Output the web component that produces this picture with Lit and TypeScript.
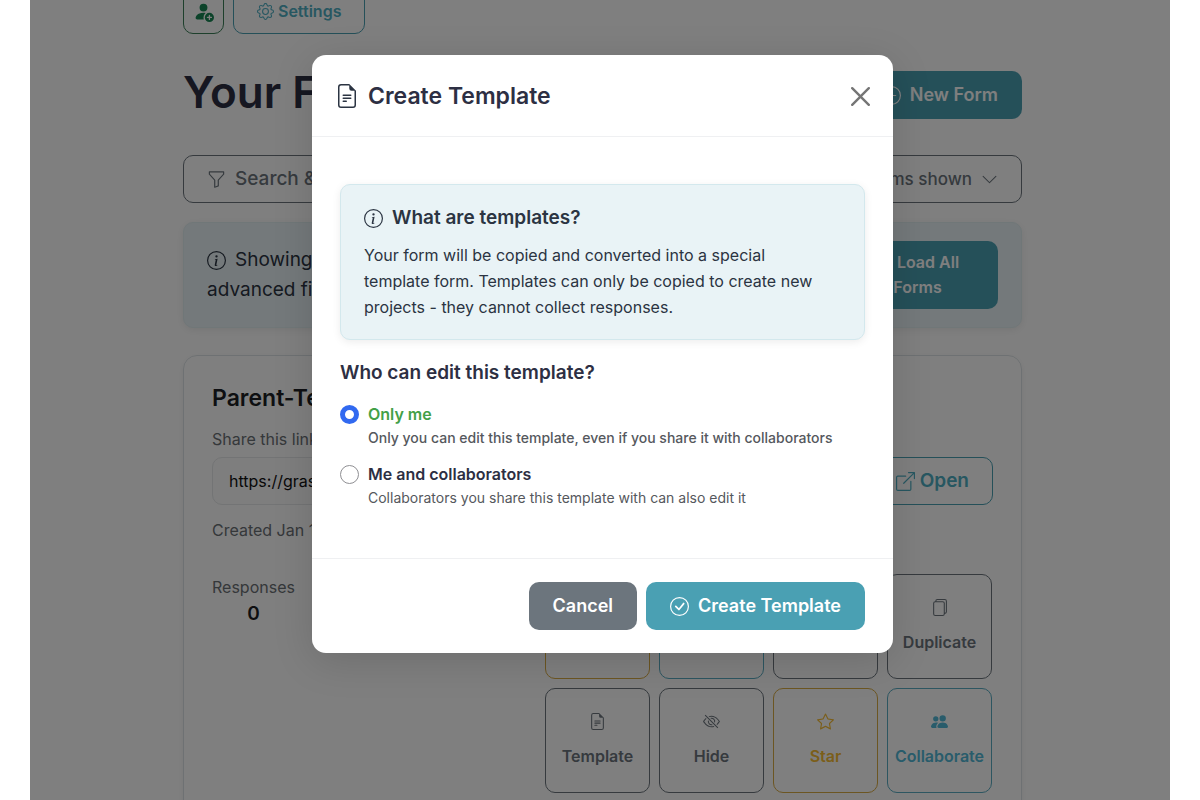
import { LitElement, html, css, svg } from "lit";
import { customElement, state } from "lit/decorators.js";

const ICONS: Record<string, string[]> = {
  fileText: [
    "M5.5 7a.5.5 0 0 0 0 1h5a.5.5 0 0 0 0-1h-5zM5 9.5a.5.5 0 0 1 .5-.5h5a.5.5 0 0 1 0 1h-5a.5.5 0 0 1-.5-.5zm0 2a.5.5 0 0 1 .5-.5h2a.5.5 0 0 1 0 1h-2a.5.5 0 0 1-.5-.5z",
    "M9.5 0H4a2 2 0 0 0-2 2v12a2 2 0 0 0 2 2h8a2 2 0 0 0 2-2V4.5L9.5 0zm0 1v2A1.5 1.5 0 0 0 11 4.5h2V14a1 1 0 0 1-1 1H4a1 1 0 0 1-1-1V2a1 1 0 0 1 1-1h5.5z",
  ],
  info: [
    "M8 15A7 7 0 1 1 8 1a7 7 0 0 1 0 14zm0 1A8 8 0 1 0 8 0a8 8 0 0 0 0 16z",
    "m8.93 6.588-2.29.287-.082.38.45.083c.294.07.352.176.288.469l-.738 3.468c-.194.897.105 1.319.808 1.319.545 0 1.178-.252 1.465-.598l.088-.416c-.2.176-.492.246-.686.246-.275 0-.375-.193-.304-.533L8.93 6.588zM9 4.5a1 1 0 1 1-2 0 1 1 0 0 1 2 0z",
  ],
  check: [
    "M8 15A7 7 0 1 1 8 1a7 7 0 0 1 0 14zm0 1A8 8 0 1 0 8 0a8 8 0 0 0 0 16z",
    "M10.97 4.97a.235.235 0 0 0-.02.022L7.477 9.417 5.384 7.323a.75.75 0 0 0-1.06 1.06L6.97 11.03a.75.75 0 0 0 1.079-.02l3.992-4.99a.75.75 0 0 0-1.071-1.05z",
  ],
  plus: [
    "M8 15A7 7 0 1 1 8 1a7 7 0 0 1 0 14zm0 1A8 8 0 1 0 8 0a8 8 0 0 0 0 16z",
    "M8 4a.5.5 0 0 1 .5.5v3h3a.5.5 0 0 1 0 1h-3v3a.5.5 0 0 1-1 0v-3h-3a.5.5 0 0 1 0-1h3v-3A.5.5 0 0 1 8 4z",
  ],
  star: [
    "M2.866 14.85c-.078.444.36.791.746.593l4.39-2.256 4.389 2.256c.386.198.824-.149.746-.592l-.83-4.73 3.522-3.356c.33-.314.16-.888-.282-.95l-4.898-.696L8.465.792a.513.513 0 0 0-.927 0L5.354 5.12l-4.898.696c-.441.062-.612.636-.283.95l3.523 3.356-.83 4.73zm4.905-2.767-3.686 1.894.694-3.957a.565.565 0 0 0-.163-.505L1.71 6.745l4.052-.576a.525.525 0 0 0 .393-.288L8 2.223l1.847 3.658a.525.525 0 0 0 .393.288l4.052.575-2.906 2.77a.565.565 0 0 0-.163.506l.694 3.957-3.686-1.894a.503.503 0 0 0-.461 0z",
  ],
  people: [
    "M7 14s-1 0-1-1 1-4 5-4 5 3 5 4-1 1-1 1H7zm4-6a3 3 0 1 0 0-6 3 3 0 0 0 0 6zm-5.784 6A2.238 2.238 0 0 1 5 13c0-1.355.68-2.75 1.936-3.72A6.325 6.325 0 0 0 5 9c-4 0-5 3-5 4s1 1 1 1h4.216zM4.5 8a2.5 2.5 0 1 0 0-5 2.5 2.5 0 0 0 0 5z",
  ],
  personAdd: [
    "M12.5 16a3.5 3.5 0 1 0 0-7 3.5 3.5 0 0 0 0 7Zm.5-5v1h1a.5.5 0 0 1 0 1h-1v1a.5.5 0 0 1-1 0v-1h-1a.5.5 0 0 1 0-1h1v-1a.5.5 0 0 1 1 0Zm-2-6a3 3 0 1 1-6 0 3 3 0 0 1 6 0Z",
    "M2 13c0 1 1 1 1 1h5.256A4.493 4.493 0 0 1 8 12.5a4.49 4.49 0 0 1 1.544-3.393C9.077 9.038 8.564 9 8 9c-5 0-6 3-6 4Z",
  ],
  funnel: [
    "M1.5 1.5A.5.5 0 0 1 2 1h12a.5.5 0 0 1 .5.5v2a.5.5 0 0 1-.128.334L10 8.692V13.5a.5.5 0 0 1-.342.474l-3 1A.5.5 0 0 1 6 14.5V8.692L1.628 3.834A.5.5 0 0 1 1.5 3.5v-2zm1 .5v1.308l4.372 4.858A.5.5 0 0 1 7 8.5v5.306l2-.666V8.5a.5.5 0 0 1 .128-.334L13.5 3.308V2h-11z",
  ],
  gear: [
    "M8 4.754a3.246 3.246 0 1 0 0 6.492 3.246 3.246 0 0 0 0-6.492zM5.754 8a2.246 2.246 0 1 1 4.492 0 2.246 2.246 0 0 1-4.492 0z",
    "M9.796 1.343c-.527-1.79-3.065-1.79-3.592 0l-.094.319a.873.873 0 0 1-1.255.52l-.292-.16c-1.64-.892-3.433.902-2.54 2.541l.159.292a.873.873 0 0 1-.52 1.255l-.319.094c-1.79.527-1.79 3.065 0 3.592l.319.094a.873.873 0 0 1 .52 1.255l-.16.292c-.892 1.64.901 3.434 2.541 2.54l.292-.159a.873.873 0 0 1 1.255.52l.094.319c.527 1.79 3.065 1.79 3.592 0l.094-.319a.873.873 0 0 1 1.255-.52l.292.16c1.64.893 3.434-.902 2.54-2.541l-.159-.292a.873.873 0 0 1 .52-1.255l.319-.094c1.79-.527 1.79-3.065 0-3.592l-.319-.094a.873.873 0 0 1-.52-1.255l.16-.292c.893-1.64-.902-3.433-2.541-2.54l-.292.159a.873.873 0 0 1-1.255-.52l-.094-.319zm-2.633.283c.246-.835 1.428-.835 1.674 0l.094.319a1.873 1.873 0 0 0 2.693 1.115l.291-.16c.764-.415 1.6.42 1.184 1.185l-.159.292a1.873 1.873 0 0 0 1.116 2.692l.318.094c.835.246.835 1.428 0 1.674l-.319.094a1.873 1.873 0 0 0-1.115 2.693l.16.291c.415.764-.42 1.6-1.185 1.184l-.291-.159a1.873 1.873 0 0 0-2.693 1.116l-.094.318c-.246.835-1.428.835-1.674 0l-.094-.319a1.873 1.873 0 0 0-2.692-1.115l-.292.16c-.764.415-1.6-.42-1.184-1.185l.159-.291A1.873 1.873 0 0 0 1.945 8.93l-.319-.094c-.835-.246-.835-1.428 0-1.674l.319-.094A1.873 1.873 0 0 0 3.06 4.377l-.16-.292c-.415-.764.42-1.6 1.185-1.184l.292.159a1.873 1.873 0 0 0 2.692-1.115l.094-.319z",
  ],
  files: [
    "M13 0H6a2 2 0 0 0-2 2 2 2 0 0 0-2 2v10a2 2 0 0 0 2 2h7a2 2 0 0 0 2-2 2 2 0 0 0 2-2V2a2 2 0 0 0-2-2zm0 13V4a2 2 0 0 0-2-2H5a1 1 0 0 1 1-1h7a1 1 0 0 1 1 1v10a1 1 0 0 1-1 1zM3 4a1 1 0 0 1 1-1h7a1 1 0 0 1 1 1v10a1 1 0 0 1-1 1H4a1 1 0 0 1-1-1V4z",
  ],
  open: [
    "M8.636 3.5a.5.5 0 0 0-.5-.5H1.5A1.5 1.5 0 0 0 0 4.5v10A1.5 1.5 0 0 0 1.5 16h10a1.5 1.5 0 0 0 1.5-1.5V7.864a.5.5 0 0 0-1 0V14.5a.5.5 0 0 1-.5.5h-10a.5.5 0 0 1-.5-.5v-10a.5.5 0 0 1 .5-.5h6.636a.5.5 0 0 0 .5-.5z",
    "M16 .5a.5.5 0 0 0-.5-.5h-5a.5.5 0 0 0 0 1h3.793L6.146 9.146a.5.5 0 1 0 .708.708L15 1.707V5.5a.5.5 0 0 0 1 0v-5z",
  ],
  chevron: [
    "M1.646 4.646a.5.5 0 0 1 .708 0L8 10.293l5.646-5.647a.5.5 0 0 1 .708.708l-6 6a.5.5 0 0 1-.708 0l-6-6a.5.5 0 0 1 0-.708z",
  ],
  eyeSlash: [
    "M13.359 11.238C15.06 9.72 16 8 16 8s-3-5.5-8-5.5a7.028 7.028 0 0 0-2.79.588l.77.771A5.944 5.944 0 0 1 8 3.5c2.12 0 3.879 1.168 5.168 2.457A13.134 13.134 0 0 1 14.828 8c-.058.087-.122.183-.195.288-.335.48-.83 1.12-1.465 1.755-.165.165-.337.328-.517.486l.708.709z",
    "M11.297 9.176a3.5 3.5 0 0 0-4.474-4.474l.823.823a2.5 2.5 0 0 1 2.829 2.829l.822.822zm-2.943 1.299.822.822a3.5 3.5 0 0 1-4.474-4.474l.823.823a2.5 2.5 0 0 0 2.829 2.829z",
    "M3.35 5.47c-.18.16-.353.322-.518.487A13.134 13.134 0 0 0 1.172 8l.195.288c.335.48.83 1.12 1.465 1.755C4.121 11.332 5.881 12.5 8 12.5c.716 0 1.39-.133 2.02-.36l.77.772A7.029 7.029 0 0 1 8 13.5C3 13.5 0 8 0 8s.939-1.721 2.641-3.238l.708.709zm10.296 8.884-12-12 .708-.708 12 12-.708.708z",
  ],
  close: [
    "M.293.293a1 1 0 0 1 1.414 0L8 6.586 14.293.293a1 1 0 1 1 1.414 1.414L9.414 8l6.293 6.293a1 1 0 0 1-1.414 1.414L8 9.414l-6.293 6.293a1 1 0 0 1-1.414-1.414L6.586 8 .293 1.707a1 1 0 0 1 0-1.414z",
  ],
};

const icon = (name: string, size = "md") => html`
  <svg class="icon ${size}" viewBox="0 0 16 16" fill="currentColor" aria-hidden="true">
    ${ICONS[name].map((d) => svg`<path d=${d}></path>`)}
  </svg>
`;

const ACTIONS = [
  { label: "Edit", icon: "fileText", tone: "yellow" },
  { label: "Share", icon: "open", tone: "cyan" },
  { label: "Settings", icon: "gear", tone: "gray" },
  { label: "Duplicate", icon: "files", tone: "gray" },
  { label: "Template", icon: "fileText", tone: "gray" },
  { label: "Hide", icon: "eyeSlash", tone: "gray" },
  { label: "Star", icon: "star", tone: "yellow" },
  { label: "Collaborate", icon: "people", tone: "cyan" },
];

const EDITORS = [
  { id: "me", label: "Only me", hint: "Only you can edit this template, even if you share it with collaborators" },
  { id: "all", label: "Me and collaborators", hint: "Collaborators you share this template with can also edit it" },
];

@customElement("app-root")
export class AppRoot extends LitElement {
  @state() private editor = "me";

  static styles = css`
    :host {
      display: block;
      background: #fff;
      font-family: Inter, "Liberation Sans", sans-serif;
      font-size: 16px;
      line-height: 24px;
      color: #2b3442;
    }
    *, *::before, *::after { box-sizing: border-box; }
    h1, h2, h3, p, fieldset, legend { margin: 0; padding: 0; border: 0; }
    button, a, input { font: inherit; color: inherit; text-decoration: none; margin: 0; }
    button { cursor: pointer; }
    .icon { display: block; flex: none; }
    .sm { width: 17px; height: 17px; }
    .md { width: 19px; height: 19px; }
    .lg { width: 24px; height: 24px; }

    .frame {
      position: relative;
      height: 100vh;
      margin: 0 30px;
      overflow: hidden;
    }
    .page {
      width: 100%;
      max-width: 844px;
      margin: -12px auto 0;
      padding-left: 5px;
    }

    .btn {
      display: inline-flex;
      align-items: center;
      justify-content: center;
      gap: 9px;
      height: 48px;
      padding: 0 23px;
      border: 1px solid transparent;
      border-radius: 10px;
      background: none;
      font-size: 18px;
      font-weight: 600;
      white-space: nowrap;
    }
    .solid { background: #4aa0b3; color: #fff; }
    .neutral { background: #6c757d; color: #fff; }
    .outline { border-color: #4aa0b3; color: #4fafc3; }

    .tabs { display: flex; gap: 9px; }
    .tabs .btn { height: 46px; font-size: 16px; gap: 4px; }
    .tabs .square { width: 41px; padding: 0; border-color: #3d8059; color: #198754; }
    .square .icon { width: 21px; height: 21px; }

    .heading {
      display: flex;
      align-items: flex-start;
      justify-content: space-between;
      margin-top: 37px;
    }
    .heading h1 {
      font-size: 44px;
      line-height: 42px;
      font-weight: 600;
      color: #2d2f43;
    }

    .filter {
      display: flex;
      width: 100%;
      justify-content: flex-start;
      margin-top: 36px;
      border-color: #6c757d;
      color: #6c757d;
      font-size: 19px;
      font-weight: 500;
    }
    .count {
      display: flex;
      align-items: center;
      gap: 9px;
      margin-left: auto;
      font-size: 17px;
    }

    .note {
      border: 1px solid #d3e8ed;
      border-radius: 10px;
      background: #e9f3f6;
      box-shadow: 0 2px 8px rgba(0, 0, 0, 0.08);
      color: #2b3442;
    }
    .banner {
      display: flex;
      align-items: center;
      justify-content: space-between;
      gap: 24px;
      margin-top: 19px;
      padding: 18px 23px;
      border-color: #e0eef1;
      font-size: 19px;
      line-height: 30px;
    }
    .banner p { align-self: flex-start; padding-top: 4px; }
    .line { display: flex; align-items: center; gap: 9px; }
    .load {
      display: block;
      flex: none;
      width: 161px;
      height: auto;
      padding: 8px 23px;
      font-size: 16px;
      line-height: 25px;
      text-align: center;
    }
    .load .line { justify-content: center; gap: 4px; }

    .card {
      margin-top: 27px;
      padding: 28px 28px 40px;
      border: 1px solid #dde3e6;
      border-radius: 14px;
      box-shadow: 0 2px 6px rgba(0, 0, 0, 0.06);
    }
    .card h2 {
      font-size: 23px;
      line-height: 28px;
      font-weight: 600;
      color: #1d1f24;
    }
    .muted { color: #6b7075; }
    .share { display: block; margin-top: 15px; }
    .link { display: flex; gap: 9px; margin-top: 6px; }
    .link input {
      flex: 1;
      min-width: 0;
      height: 48px;
      padding: 0 16px;
      border: 1px solid #e6e8ea;
      border-radius: 10px;
      background: #fcfcfd;
      color: #111;
    }
    .link .btn { gap: 5px; font-size: 19px; }
    .created { margin-top: 13px; }
    .stats {
      display: flex;
      justify-content: space-between;
      margin-top: 32px;
      padding-right: 1px;
    }
    .stat { display: grid; gap: 3px; align-content: start; text-align: center; }
    .responses { margin-top: 1px; }
    .stat strong { font-size: 19px; font-weight: 600; color: #1d1f24; }
    .actions {
      display: grid;
      grid-template-columns: repeat(4, 105px);
      grid-auto-rows: 105px;
      gap: 9px;
    }
    .action {
      display: flex;
      flex-direction: column;
      align-items: center;
      justify-content: center;
      gap: 14px;
      padding: 0;
      border: 1px solid;
      border-radius: 10px;
      background: none;
      font-weight: 600;
    }
    .gray { color: #6c757d; }
    .yellow { color: #f6bd35; border-color: #d9ac45; }
    .cyan { color: #52b8d6; border-color: #5aacc2; }

    .overlay {
      position: absolute;
      inset: 0;
      display: flex;
      align-items: flex-start;
      justify-content: center;
      padding: 55px 0 0 5px;
      background: rgba(0, 0, 0, 0.5);
    }
    .modal {
      width: 100%;
      max-width: 581px;
      border-radius: 14px;
      background: #fff;
      box-shadow: 0 8px 40px rgba(0, 0, 0, 0.14);
    }
    .top {
      display: flex;
      align-items: center;
      gap: 9px;
      padding: 25px 23px 24px;
      border-bottom: 1px solid #eff0f2;
    }
    .top h2 {
      flex: 1;
      font-size: 23px;
      line-height: 32px;
      font-weight: 600;
      color: #2d2f43;
    }
    .close {
      padding: 0;
      border: 0;
      background: none;
      color: #757575;
    }
    .body { padding: 47px 28px 48px; }
    .about { padding: 21px 23px 19px; }
    .about h3 {
      display: flex;
      align-items: center;
      gap: 9px;
      font-size: 19px;
      line-height: 24px;
      font-weight: 600;
    }
    .about p { margin-top: 12px; line-height: 26px; }
    .choices { display: grid; gap: 12px; margin-top: 20px; min-width: 0; }
    .choices legend {
      margin-bottom: 16px;
      font-size: 19px;
      line-height: 26px;
      font-weight: 600;
      color: #2d2f43;
    }
    .choice {
      display: grid;
      grid-template-columns: 19px 1fr;
      column-gap: 9px;
      align-items: center;
    }
    .choice input {
      appearance: none;
      width: 19px;
      height: 19px;
      border: 1px solid #8f8f93;
      border-radius: 50%;
      background: #fff;
    }
    .choice input:checked { border: 5px solid #3169f0; }
    .choice label { font-weight: 600; color: #2d2f43; }
    .choice input:checked + label { color: #43a047; }
    .choice p {
      grid-column: 2;
      font-size: 14px;
      color: #55585d;
    }
    .choice input:checked ~ p { font-weight: 500; }
    .bottom {
      display: flex;
      justify-content: flex-end;
      gap: 9px;
      padding: 23px 28px;
      border-top: 1px solid #eff0f2;
    }
  `;

  private renderPage() {
    return html`
      <main class="page">
        <nav class="tabs">
          <button class="btn square" aria-label="Add user">${icon("personAdd")}</button>
          <button class="btn outline">${icon("gear", "sm")}Settings</button>
        </nav>
        <header class="heading">
          <h1>Your Forms</h1>
          <button class="btn solid">${icon("plus")}New Form</button>
        </header>
        <button class="btn filter">
          ${icon("funnel")}<span>Search &amp; Filter</span>
          <span class="count">20 forms shown ${icon("chevron", "sm")}</span>
        </button>
        <section class="note banner">
          <p>
            <span class="line">${icon("info")}Showing your most recent forms. Use</span>
            advanced filters to find the others.
          </p>
          <button class="btn solid load"><span class="line">${icon("plus", "sm")}Load All</span>Forms</button>
        </section>
        <article class="card">
          <h2>Parent-Teacher Form</h2>
          <label class="share muted" for="url">Share this link to collect responses</label>
          <div class="link">
            <input id="url" readonly value="https://grassrootsforms.example" />
            <a class="btn outline" href="#open">${icon("open")}Open</a>
          </div>
          <p class="created muted">Created Jan 12</p>
          <div class="stats">
            <div class="stat"><span class="responses muted">Responses</span><strong>0</strong></div>
            <div class="actions">
              ${ACTIONS.map(
                (a) => html`<button class="action ${a.tone}">${icon(a.icon, "sm")}<span>${a.label}</span></button>`
              )}
            </div>
          </div>
        </article>
      </main>
    `;
  }

  private renderModal() {
    return html`
      <div class="overlay">
        <section class="modal" role="dialog" aria-modal="true" aria-labelledby="title">
          <header class="top">
            ${icon("fileText", "lg")}
            <h2 id="title">Create Template</h2>
            <button class="close" aria-label="Close">${icon("close")}</button>
          </header>
          <div class="body">
            <div class="note about">
              <h3>${icon("info")}What are templates?</h3>
              <p>
                Your form will be copied and converted into a special<br />template form. Templates can only be copied
                to create new<br />projects - they cannot collect responses.
              </p>
            </div>
            <fieldset class="choices">
              <legend>Who can edit this template?</legend>
              ${EDITORS.map(
                (e) => html`
                  <div class="choice">
                    <input
                      type="radio"
                      name="editor"
                      id=${e.id}
                      .checked=${this.editor === e.id}
                      @change=${() => (this.editor = e.id)}
                    />
                    <label for=${e.id}>${e.label}</label>
                    <p>${e.hint}</p>
                  </div>
                `
              )}
            </fieldset>
          </div>
          <footer class="bottom">
            <button class="btn neutral">Cancel</button>
            <button class="btn solid">${icon("check")}Create Template</button>
          </footer>
        </section>
      </div>
    `;
  }

  render() {
    return html`<div class="frame">${this.renderPage()}${this.renderModal()}</div>`;
  }
}
